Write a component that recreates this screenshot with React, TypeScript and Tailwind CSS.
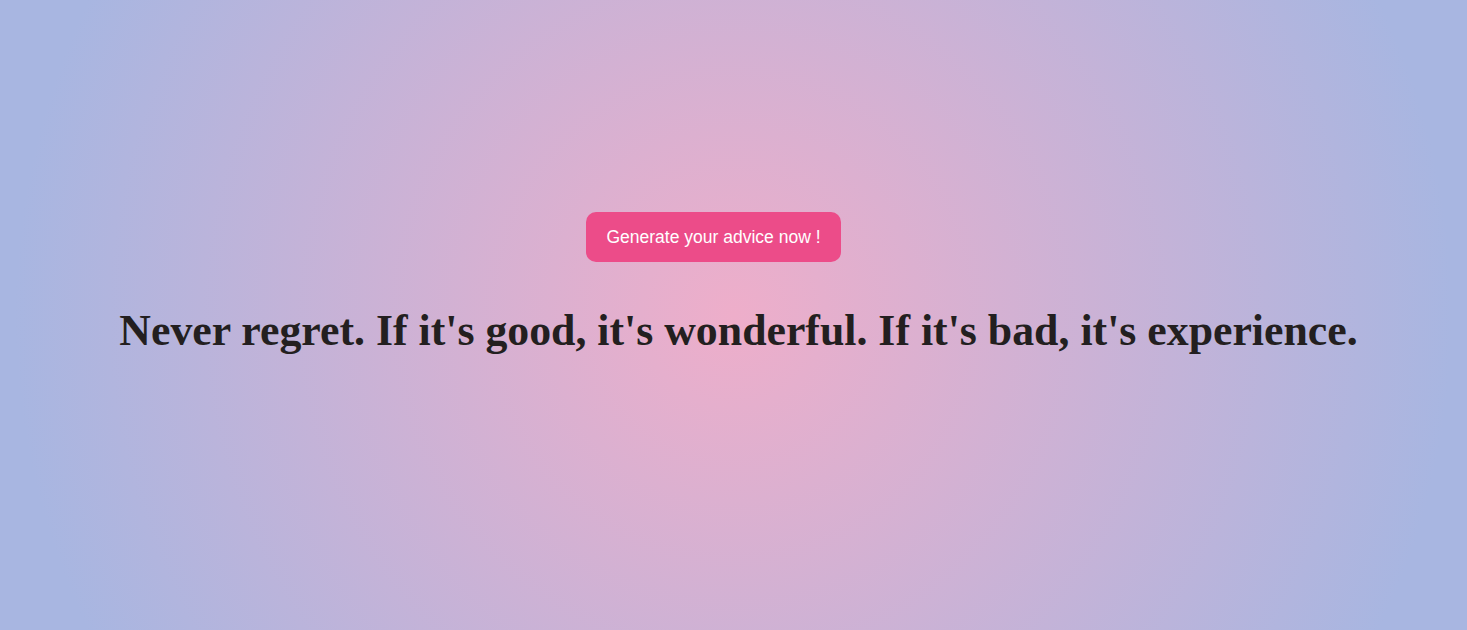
import React from "react";

export default function App() {
  return (
    <div className="w-full h-[630px] overflow-hidden bg-[radial-gradient(circle,#eeaeca_0%,#a8b6e1_90%)] flex flex-col items-center pt-[212px]">
      <button className="mr-[40px] h-[50px] px-[20px] rounded-[10px] bg-[#ec4c89] text-white text-[17.5px] font-['Liberation_Sans',Arial,sans-serif]">
        Generate your advice now !
      </button>
      <h1 className="mt-[40px] ml-[10px] text-[43.8px] leading-[56px] font-bold text-[#231f20] font-['Liberation_Serif','Times_New_Roman',serif]">
        Never regret. If it's good, it's wonderful. If it's bad, it's experience.
      </h1>
    </div>
  );
}
